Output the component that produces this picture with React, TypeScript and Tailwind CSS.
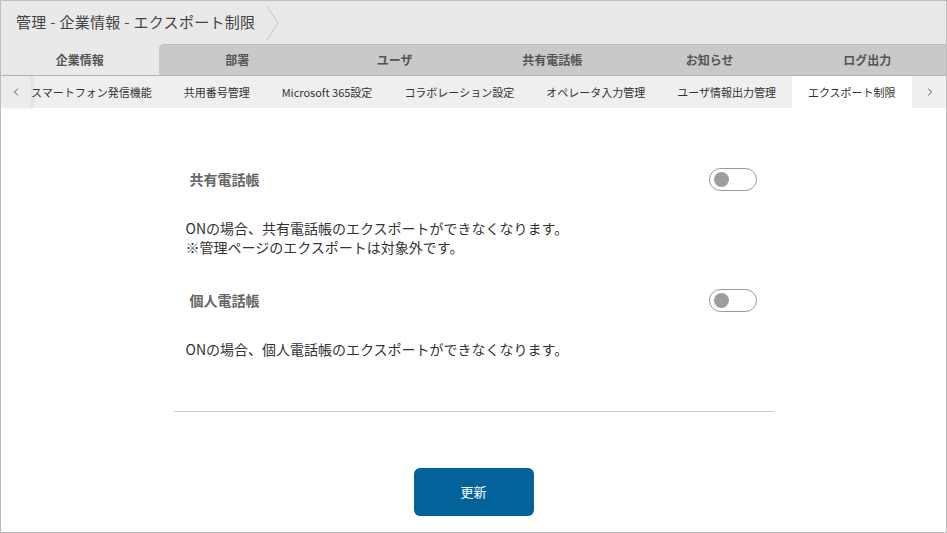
import { ChevronLeft, ChevronRight } from "lucide-react";

const mainTabs = ["企業情報", "部署", "ユーザ", "共有電話帳", "お知らせ", "ログ出力"];
const subTabs = [
  "スマートフォン発信機能",
  "共用番号管理",
  "Microsoft 365設定",
  "コラボレーション設定",
  "オペレータ入力管理",
  "ユーザ情報出力管理",
  "エクスポート制限",
];

function Toggle() {
  return (
    <div className="flex h-[23px] w-[48px] items-center rounded-full border border-[#9a9a9a] bg-white pl-[4px]">
      <div className="h-[15px] w-[15px] rounded-full bg-[#9e9e9e]" />
    </div>
  );
}

function Setting({ label, lines }: { label: string; lines: string[] }) {
  return (
    <div className="flex flex-col">
      <div className="flex h-[24px] items-center justify-between pl-[16px] pr-[17px]">
        <span className="text-[14px] font-bold text-[#666666]">{label}</span>
        <Toggle />
      </div>
      <div className="mt-[28px] pl-[12px] text-[14px] leading-[19px] text-[#333333]">
        {lines.map((l) => (
          <div key={l}>{l}</div>
        ))}
      </div>
    </div>
  );
}

export default function App() {
  return (
    <div
      className="flex h-[533px] w-[947px] flex-col overflow-hidden border border-[#bdbdbd] bg-white"
      style={{ fontFamily: '"Noto Sans CJK JP", "Noto Sans", sans-serif' }}
    >
      {/* breadcrumb */}
      <div className="flex h-[43px] items-center bg-[#e9e9e9]">
        <span className="pl-[15px] text-[15px] tracking-[0.3px] text-[#444444]">管理 - 企業情報 - エクスポート制限</span>
        <svg width="16" height="38" viewBox="0 0 16 38" className="ml-[10px]">
          <path d="M2 2 L13 19 L2 36" fill="none" stroke="#c4c4c4" strokeWidth="1" />
        </svg>
      </div>

      {/* main tabs */}
      <div className="flex h-[32px] border-b border-[#b5b5b5] bg-[#e9e9e9]">
        {mainTabs.map((t, i) => (
          <div
            key={t}
            className={
              i === 0
                ? "flex flex-1 items-center justify-center bg-[#e9e9e9] text-[12px] font-bold text-[#555555]"
                : i === 1
                ? "flex flex-1 items-center justify-center rounded-tl-[5px] border-t border-[#bdbdbd] bg-[#c9c9c9] text-[12px] font-bold text-[#555555]"
                : "flex flex-1 items-center justify-center border-t border-[#bdbdbd] bg-[#c9c9c9] text-[12px] font-bold text-[#555555]"
            }
          >
            {t}
          </div>
        ))}
      </div>

      {/* sub tabs */}
      <div className="flex h-[32px] bg-[#efefef]">
        <div className="flex w-[30px] shrink-0 items-center justify-center bg-[#ececec] shadow-[2px_0_3px_rgba(0,0,0,0.08)]">
          <ChevronLeft size={12} strokeWidth={2} color="#555" />
        </div>
        <div className="flex flex-1 overflow-hidden">
          {subTabs.map((t, i) => (
            <div
              key={t}
              className={
                i === 0
                  ? "flex shrink-0 items-center pl-0 pr-[16px] text-[11px] text-[#333333] whitespace-nowrap"
                  : i === subTabs.length - 1
                  ? "flex shrink-0 items-center bg-white px-[16px] text-[11px] text-[#333333] whitespace-nowrap"
                  : "flex shrink-0 items-center px-[16px] text-[11px] text-[#333333] whitespace-nowrap"
              }
            >
              {t}
            </div>
          ))}
        </div>
        <div className="flex w-[33px] shrink-0 items-center justify-center bg-[#efefef]">
          <ChevronRight size={12} strokeWidth={2} color="#555" />
        </div>
      </div>

      {/* body */}
      <div className="flex flex-1 flex-col items-center">
        <div className="mt-[59px] flex w-[600px] flex-col">
          <Setting
            label="共有電話帳"
            lines={["ONの場合、共有電話帳のエクスポートができなくなります。", "※管理ページのエクスポートは対象外です。"]}
          />
          <div className="mt-[31px]">
            <Setting label="個人電話帳" lines={["ONの場合、個人電話帳のエクスポートができなくなります。"]} />
          </div>
          <div className="mt-[52px] border-t border-[#cfcfcf]" />
        </div>
        <button className="mt-[56px] h-[48px] w-[120px] rounded-[6px] bg-[#04629b] text-[13px] text-white">
          更新
        </button>
      </div>
    </div>
  );
}
